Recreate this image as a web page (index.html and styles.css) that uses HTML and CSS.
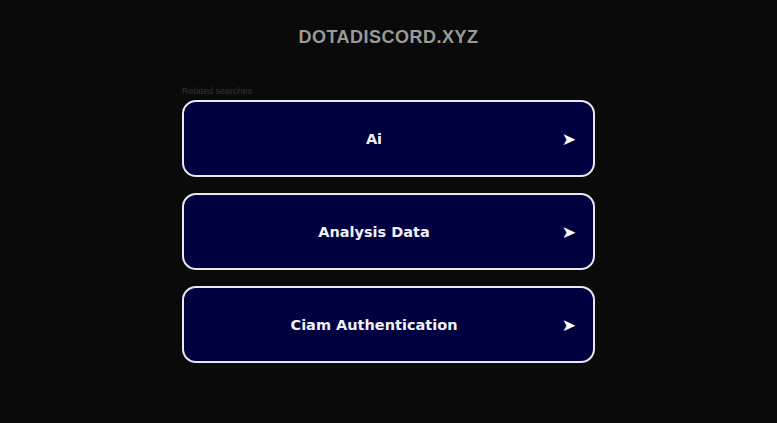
FILE: index.html
```html
<!DOCTYPE html>
<html>
<head>
  <title>dotadiscord.xyz</title>
  <link rel="stylesheet" href="styles.css">
</head>
<body>

  <div class="header">
    <h1 class="domain">dotadiscord.xyz</h1>
  </div>

  <div class="related">
    <div class="related-title">Related searches</div>

    <a class="search-link" href="#">
      <span class="link-text">Ai</span>
      <span class="link-arrow">&#10148;</span>
    </a>

    <a class="search-link" href="#">
      <span class="link-text">Analysis Data</span>
      <span class="link-arrow">&#10148;</span>
    </a>

    <a class="search-link" href="#">
      <span class="link-text">Ciam Authentication</span>
      <span class="link-arrow">&#10148;</span>
    </a>
  </div>

</body>
</html>
```

FILE: styles.css
```css
body {
  margin: 0;
  background: #0a0a0a;
  font-family: 'DejaVu Sans', sans-serif;
  color: #fff;
}
.header {
  display: flex;
  justify-content: center;
  padding-top: 25px;
}
.domain {
  margin: 0;
  font-family: 'Liberation Sans', Arial, sans-serif;
  font-size: 18px;
  font-weight: bold;
  letter-spacing: 0.5px;
  text-transform: uppercase;
  color: #9a9a9a;
  line-height: 24px;
}
.related {
  width: 413px;
  margin: 37px auto 0;
}
.related-title {
  font-family: 'Liberation Sans', Arial, sans-serif;
  font-size: 9px;
  color: #333;
  line-height: 11px;
  margin-bottom: 3px;
}
.search-link {
  position: relative;
  display: flex;
  align-items: center;
  justify-content: center;
  height: 73px;
  margin-bottom: 16px;
  background: #000040;
  border: 2px solid #e8e8f0;
  border-radius: 14px;
  text-decoration: none;
  color: #f0f0f8;
}
.link-text {
  font-size: 14.5px;
  font-weight: bold;
  margin-left: -29px;
}
.link-arrow {
  position: absolute;
  right: 17px;
  top: 50%;
  transform: translateY(-50%);
  font-size: 17px;
  color: #fff;
}
```
